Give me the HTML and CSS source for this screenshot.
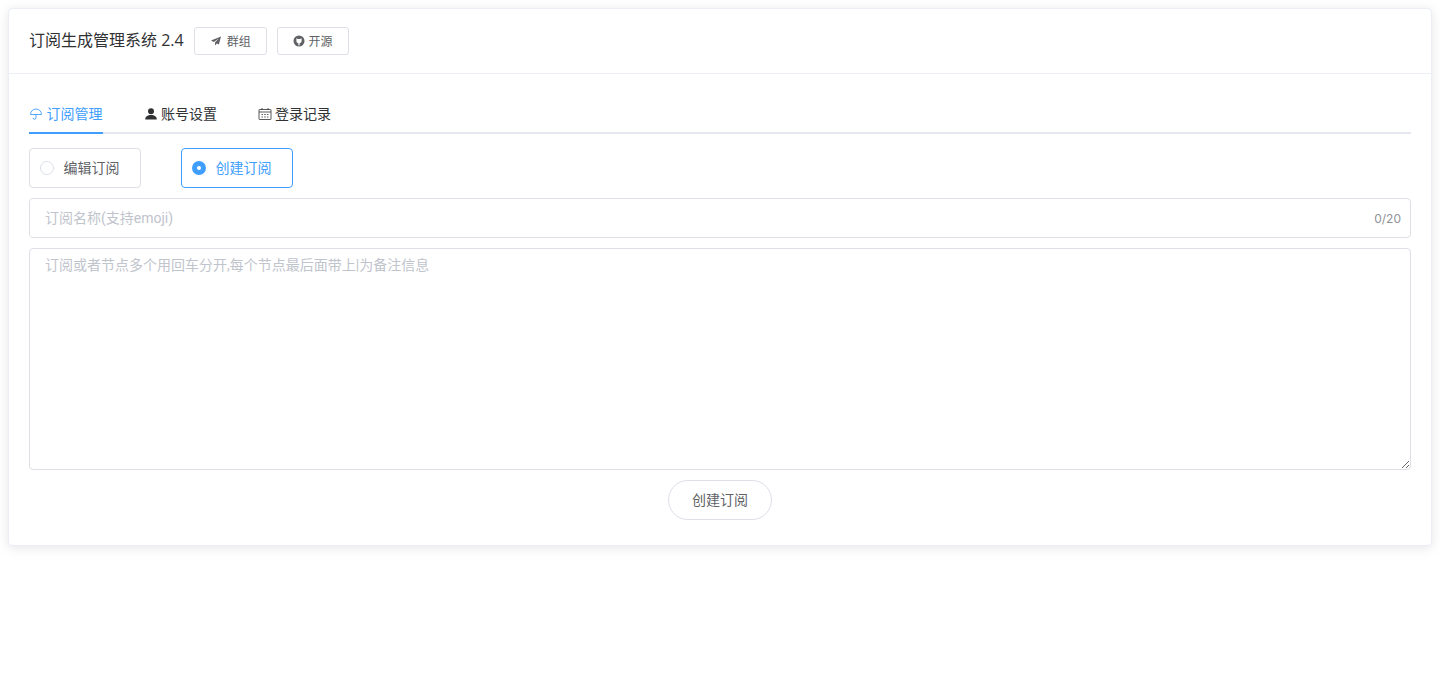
FILE: index.html
```html
<!DOCTYPE html>
<html>
<head>
    <meta charset="UTF-8">
    <title>订阅生成管理系统</title>
    <link rel="stylesheet" href="styles.css">
</head>
<body>
    <div class="card">
        <div class="card-header">
            <span class="title">订阅生成管理系统 2.4</span>
            <a class="mini-btn">
                <svg class="mini-icon" viewBox="0 0 12 12"><path d="M11 1.5 1 5.6l2.900 1.300L9 3.200 5 7.600v3l1.900-2 2 .9z"/></svg>
                <span class="label">群组</span>
            </a>
            <a class="mini-btn mini-btn-src">
                <svg class="mini-icon" viewBox="0 0 12 12"><path fill-rule="evenodd" d="M6 .5a5.500 5.500 0 1 1 0 11 5.500 5.500 0 0 1 0-11zM3.400 3.300v2.600c0 1.300.9 2.200 2 2.300v2.200h1.200V8.200c1.100-.1 2-1 2-2.300V3.300L7.200 4.100H4.800z"/></svg>
                <span class="label">开源</span>
            </a>
        </div>
        <div class="card-body">
            <div class="tabs">
                <div class="tab active">
                    <svg class="tab-icon" viewBox="0 0 14 14" fill="none" stroke="currentColor" stroke-width=".9"><path d="M1.500 7.500a5.500 5.500 0 0 1 11 0zM7 7.500v3.300a1.500 1.500 0 0 1-3 0"/></svg>
                    <span class="label">订阅管理</span>
                </div>
                <div class="tab">
                    <svg class="tab-icon" viewBox="0 0 14 14" fill="currentColor"><circle cx="7" cy="4.200" r="3"/><path d="M1.200 12.500c0-3 2.300-4.500 5.800-4.500s5.800 1.500 5.800 4.500z"/></svg>
                    <span class="label">账号设置</span>
                </div>
                <div class="tab">
                    <svg class="tab-icon" viewBox="0 0 14 14" fill="none" stroke="currentColor" stroke-width=".8"><rect x="1" y="2.500" width="12" height="10" rx=".5"/><path d="M1 5h12M4 1v2M10 1v2"/><path stroke-dasharray="1.500 1.200" d="M3.500 7.500h7M3.500 10h7"/></svg>
                    <span class="label">登录记录</span>
                </div>
            </div>
            <div class="radio-row">
                <label class="radio">
                    <span class="radio-dot"></span>
                    <span class="label">编辑订阅</span>
                </label>
                <label class="radio checked">
                    <span class="radio-dot"></span>
                    <span class="label">创建订阅</span>
                </label>
            </div>
            <div class="input-wrap">
                <input class="input" type="text" placeholder="订阅名称(支持emoji)">
                <span class="count">0/20</span>
            </div>
            <textarea class="textarea" placeholder="订阅或者节点多个用回车分开,每个节点最后面带上|为备注信息"></textarea>
            <div class="actions">
                <button class="round-btn">创建订阅</button>
            </div>
        </div>
    </div>
</body>
</html>
```

FILE: styles.css
```css
* {
    box-sizing: border-box;
    font-family: Inter, "Noto Sans CJK SC", sans-serif;
}
body {
    margin: 0;
    padding: 8px;
    background: white;
    min-height: 100vh;
}
.card {
    background: white;
    border: 1px solid #ebeef5;
    border-radius: 4px;
    box-shadow: 0 2px 12px rgba(0,0,0,0.1);
    height: 538px;
}
.card-header {
    display: flex;
    align-items: center;
    height: 65px;
    padding: 0 20px;
    border-bottom: 1px solid #ebeef5;
}
.title {
    margin-right: 10px;
    margin-bottom: 4px;
    font-family: "Open Sans", "Noto Sans CJK SC", sans-serif;
    font-size: 16px;
    color: #303133;
}
.label {
    margin-bottom: 2px;
}
.mini-btn {
    display: flex;
    align-items: center;
    justify-content: center;
    width: 73px;
    height: 28px;
    margin-right: 10px;
    border: 1px solid #dcdfe6;
    border-radius: 3px;
    font-size: 12px;
    color: #606266;
}
.mini-btn-src {
    width: 72px;
}
.mini-icon {
    width: 12px;
    height: 12px;
    margin-right: 5px;
    fill: #606266;
}
.mini-btn-src .mini-icon {
    margin-right: 3.5px;
}
.card-body {
    padding: 20px;
}
.tabs {
    display: flex;
    height: 40px;
    border-bottom: 2px solid #e4e7ed;
    margin-bottom: 14px;
}
.tab {
    display: flex;
    align-items: center;
    height: 40px;
    margin-right: 41px;
    font-size: 14px;
    color: #303133;
}
.tab.active {
    padding-top: 2px;
    padding-right: .5px;
    color: #409eff;
    border-bottom: 2px solid #409eff;
}
.tab-icon {
    width: 14px;
    height: 14px;
    margin-right: 3px;
}
.tab.active .tab-icon {
    margin-right: 3.5px;
}
.radio-row {
    display: flex;
    gap: 40px;
    margin-bottom: 10px;
}
.radio {
    display: flex;
    align-items: center;
    width: 112px;
    height: 40px;
    padding-left: 10px;
    border: 1px solid #dcdfe6;
    border-radius: 4px;
    font-size: 14px;
    color: #606266;
}
.radio-dot {
    width: 14px;
    height: 14px;
    margin-right: 9.5px;
    border: 1px solid #dcdfe6;
    border-radius: 50%;
    background: white;
}
.radio.checked {
    border-color: #409eff;
    color: #409eff;
}
.radio.checked .radio-dot {
    border: 5px solid #409eff;
}
.input-wrap {
    display: flex;
    align-items: center;
    height: 40px;
    margin-bottom: 10px;
    padding-right: 9px;
    border: 1px solid #dcdfe6;
    border-radius: 4px;
}
.input {
    flex: 1;
    height: 38px;
    padding: 0 15px;
    border: none;
    outline: none;
    border-radius: 4px;
    font-family: Roboto, "Noto Sans CJK SC", sans-serif;
    font-size: 14px;
    color: #606266;
}
.input::placeholder, .textarea::placeholder {
    color: #c0c4cc;
    opacity: 1;
}
.count {
    font-size: 12px;
    color: #909399;
}
.textarea {
    display: block;
    width: 100%;
    height: 222px;
    padding: 5px 15px;
    border: 1px solid #dcdfe6;
    border-radius: 4px;
    outline: none;
    font-family: Roboto, "Noto Sans CJK SC", sans-serif;
    font-size: 14px;
    line-height: 22px;
    color: #606266;
}
.actions {
    display: flex;
    justify-content: center;
    margin-top: 10px;
}
.round-btn {
    width: 104px;
    height: 40px;
    padding-bottom: 3px;
    border: 1px solid #dcdfe6;
    border-radius: 20px;
    background: white;
    font-size: 14px;
    color: #606266;
}
```
